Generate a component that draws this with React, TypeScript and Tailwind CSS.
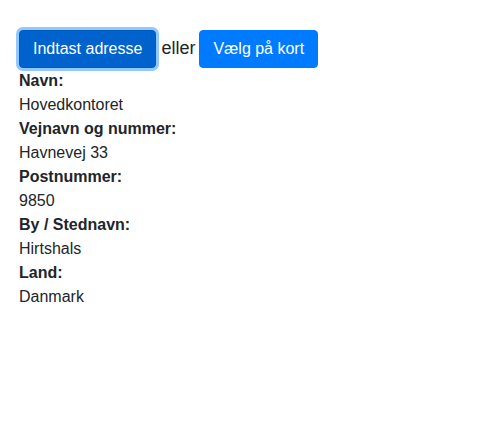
const fields = [
  { label: 'Navn:', value: 'Hovedkontoret' },
  { label: 'Vejnavn og nummer:', value: 'Havnevej 33' },
  { label: 'Postnummer:', value: '9850' },
  { label: 'By / Stednavn:', value: 'Hirtshals' },
  { label: 'Land:', value: 'Danmark' },
]

export default function App() {
  return (
    <div className="min-h-screen bg-white pl-[19px] pt-[30px] font-['Liberation_Sans',Arial,sans-serif] text-base leading-6 text-[#212529]">
      <div className="flex items-baseline">
        <button className="h-[38px] rounded-[4px] border border-[#005cbf] bg-[#0062cc] px-[13px] text-base font-medium text-white shadow-[0_0_0_3px_rgba(38,143,255,0.5)]">
          Indtast adresse
        </button>
        <span className="ml-[5px] text-[18px]">eller</span>
        <button className="ml-1 h-[38px] rounded-[4px] border border-[#007bff] bg-[#007bff] px-[13px] text-base font-medium text-white">
          Vælg på kort
        </button>
      </div>
      <div className="mt-px">
        {fields.map((f) => (
          <div key={f.label}>
            <div className="font-bold">{f.label}</div>
            <div>{f.value}</div>
          </div>
        ))}
      </div>
    </div>
  )
}
